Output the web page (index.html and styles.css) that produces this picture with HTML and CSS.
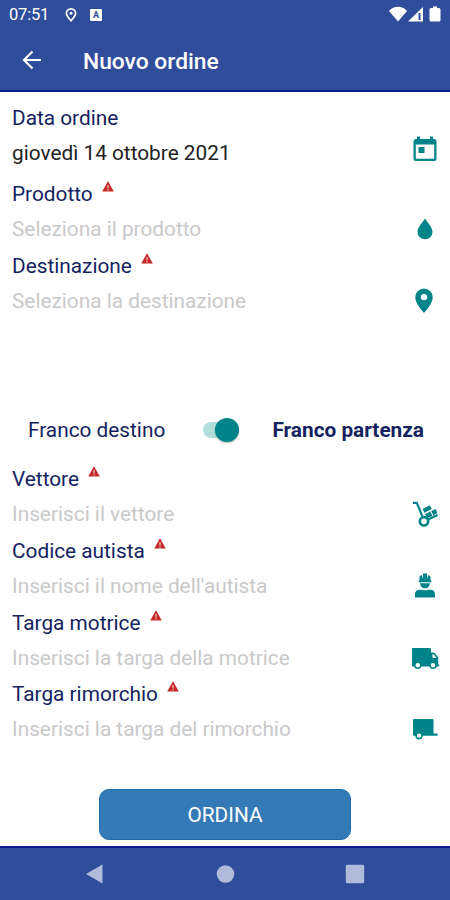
FILE: index.html
```html
<!DOCTYPE html>
<html lang="it">
<head>
<meta charset="utf-8">
<title>Nuovo ordine</title>
<link rel="stylesheet" href="styles.css">
</head>
<body>
<svg class="defs" aria-hidden="true">
  <symbol id="warn" viewBox="0 0 12 11"><path fill="#c62828" d="M6 .2 11.8 10.6H.2z"/><path stroke="#fff" stroke-opacity=".75" stroke-width="1.2" d="M6 4v3.4M6 8.3v1.1"/></symbol>
</svg>
<header class="top">
  <div class="status">
    <span class="clock">07:51</span>
    <svg class="s-pin" viewBox="0 0 12 14"><path fill="none" stroke="#fff" stroke-width="1.7" d="M6 12.8C3.2 9.7 1.4 7.4 1.4 5.3a4.6 4.4 0 0 1 9.2 0C10.6 7.4 8.8 9.7 6 12.8z"/><circle cx="6" cy="5.3" r="1.5" fill="#fff"/></svg>
    <span class="s-a">A</span>
    <svg class="s-net" viewBox="0 0 53 17"><path fill="#fff" d="M0 5C5-.6 13-.6 18 5L9 15.600zM19 15.600 34 1v14.600z"/><path fill="#2f4d9b" d="M29.500 7h2v7h-2z"/><path fill="#fff" d="M44 .5h4V2h2q1.500 0 1.500 1.500v10.600q0 1.500-1.500 1.500h-8q-1.500 0-1.500-1.500V3.500Q40.500 2 42 2h2z"/></svg>
  </div>
  <div class="bar">
    <svg class="back" viewBox="0 0 20 20"><path fill="none" stroke="#fff" stroke-width="2.200" d="M19 10H2.500M10.500 1.500 2 10l8.500 8.500"/></svg>
    <h1>Nuovo ordine</h1>
  </div>
</header>
<main>
  <section class="group">
    <div class="field date">
      <div><div class="label"><span>Data ordine</span></div><div class="value">giovedì 14 ottobre 2021</div></div>
      <svg class="icon" viewBox="0 0 28 28"><path fill="#008489" fill-rule="evenodd" d="M6 1.500h3V4h10V1.500h3V4h1q2.500 0 2.500 2.500v17q0 2.500-2.500 2.500H5q-2.500 0-2.500-2.500v-17Q2.500 4 5 4h1zM4.800 9.500v14.200h18.400V9.500zM7.500 12h6v6h-6z"/></svg>
    </div>
    <div class="field">
      <div><div class="label"><span>Prodotto</span><svg class="warn"><use href="#warn"/></svg></div><div class="hint">Seleziona il prodotto</div></div>
      <svg class="icon" viewBox="0 0 28 28"><path fill="#008489" d="M14 3.500C17 8 21.500 12.600 21.500 17a7.500 7.300 0 0 1-15 0C6.500 12.600 11 8 14 3.500z"/></svg>
    </div>
    <div class="field">
      <div><div class="label"><span>Destinazione</span><svg class="warn"><use href="#warn"/></svg></div><div class="hint">Seleziona la destinazione</div></div>
      <svg class="icon" viewBox="0 0 28 28"><path fill="#008489" fill-rule="evenodd" d="M13 26C8 20 4.300 15 4.300 10.200a8.700 8.700 0 0 1 17.400 0C21.700 15 18 20 13 26zM13 6.900a3.200 3.200 0 1 0 0 6.400 3.200 3.200 0 0 0 0-6.400z"/></svg>
    </div>
  </section>
  <div class="choice">
    <span class="off">Franco destino</span>
    <span class="switch"><span class="knob"></span></span>
    <span class="on">Franco partenza</span>
  </div>
  <section class="group">
    <div class="field">
      <div><div class="label"><span>Vettore</span><svg class="warn"><use href="#warn"/></svg></div><div class="hint">Inserisci il vettore</div></div>
      <svg class="icon" viewBox="0 0 28 28"><path fill="none" stroke="#008489" stroke-width="2.200" d="M2 2.800h3.800l5.700 14M17 19.500l9.500-4.500"/><circle cx="13" cy="21.300" r="4.200" fill="none" stroke="#008489" stroke-width="2.700"/><path fill="#008489" d="m11.500 9 7.300-3.800 2 3.900-7.300 3.700zM14 14.200l5.300-2.600 2.100 4.100-5.300 2.500zM20.300 11.100l4.200-2.200 2 4.200-4.200 2.100z"/></svg>
    </div>
    <div class="field">
      <div><div class="label"><span>Codice autista</span><svg class="warn"><use href="#warn"/></svg></div><div class="hint">Inserisci il nome dell'autista</div></div>
      <svg class="icon" viewBox="0 0 28 28"><g fill="#008489"><path d="M8.500 8.300V4.500q.8-1 2.300-1.500l1.200 4V1.500h4v5.500l1.200-4q1.500.5 2.300 1.500v3.800h.8v2H7.700v-2zM9 11.200h10q-.5 5-5 5t-5-5zM4 25.500v-3.200q0-4.600 5-4.600h1.500q3.500 1.300 7 0H19q5 0 5 4.600v3.200z"/></g></svg>
    </div>
    <div class="field">
      <div><div class="label"><span>Targa motrice</span><svg class="warn"><use href="#warn"/></svg></div><div class="hint">Inserisci la targa della motrice</div></div>
      <svg class="icon" viewBox="0 0 28 28"><path fill="#008489" d="M2 4h17q1 0 1 1v3.500h2.500q1 0 1.700 1l3 4v7H28v2H2q-1 0-1-1V5q0-1 1-1z"/><path fill="#fff" d="M21.500 10.300h1.300l2.600 3.700h-3.900z"/><g fill="#fff" stroke="#008489" stroke-width="1.500"><circle cx="6.800" cy="21.200" r="3"/><circle cx="22" cy="21.200" r="3"/></g></svg>
    </div>
    <div class="field">
      <div><div class="label"><span>Targa rimorchio</span><svg class="warn"><use href="#warn"/></svg></div><div class="hint">Inserisci la targa del rimorchio</div></div>
      <svg class="icon" viewBox="0 0 28 28"><path fill="#008489" d="M3 4h18.500q1 0 1 1v13.500H26.500v2.200H3q-1 0-1-1V5q0-1 1-1z"/><circle cx="8" cy="20.700" r="2.900" fill="#fff" stroke="#008489" stroke-width="1.600"/></svg>
    </div>
  </section>
  <button class="order">ORDINA</button>
</main>
<nav class="nav">
  <svg viewBox="0 0 20 20"><path fill="#b0bbdc" d="M17.500 .5v19L1 10z"/></svg>
  <svg viewBox="0 0 20 20"><circle cx="10.500" cy="10" r="8.800" fill="#b0bbdc"/></svg>
  <svg viewBox="0 0 20 20"><rect x=".8" y=".8" width="18.400" height="18.400" rx="1.500" fill="#b0bbdc"/></svg>
</nav>
</body>
</html>
```
FILE: styles.css
```css
* { box-sizing: border-box; }
body {
  margin: 0;
  width: 450px;
  height: 900px;
  display: flex;
  flex-direction: column;
  overflow: hidden;
  background: #fff;
  font-family: Roboto, sans-serif;
  font-size: 20.8px;
  color: #14235f;
}
.defs { display: none; }
svg { display: block; flex: none; }
.top {
  height: 92px;
  flex: none;
  background: #2f4d9b;
  border-bottom: 2px solid #0b1f8c;
  color: #fff;
}
.status {
  height: 29px;
  padding: 0 8px 0 9px;
  display: flex;
  align-items: center;
}
.clock { font-size: 16.5px; width: 56px; letter-spacing: -.2px; }
.s-pin { width: 12px; height: 14px; }
.s-a {
  width: 12px;
  height: 12px;
  margin-left: 13px;
  border-radius: 1px;
  background: #fff;
  color: #2f4d9b;
  font-size: 9px;
  font-weight: 700;
  line-height: 12px;
  text-align: center;
}
.s-net { width: 53px; height: 17px; margin-left: auto; }
.bar {
  height: 61px;
  padding-left: 22px;
  display: flex;
  align-items: center;
}
.back { width: 20px; height: 20px; }
h1 { margin: 4px 0 0 41px; font-size: 22.8px; font-weight: 500; line-height: 30px; }
main { height: 754px; flex: none; padding-top: 8px; }
.field {
  height: 71.6px;
  padding: 0 11px 0 12px;
  display: flex;
  justify-content: space-between;
}
.date { height: 76.2px; }
.label {
  height: 36px;
  display: flex;
  line-height: 37px;
}
.warn { width: 12px; height: 11px; margin: 5px 0 0 9px; }
.value, .hint { line-height: 35px; white-space: nowrap; }
.value { color: #222; }
.hint { color: #c9c9c9; }
.icon { width: 28px; height: 28px; margin-top: 39px; }
.date .icon { margin-top: 35px; }
.choice {
  height: 142px;
  padding: 99px 26px 0 28px;
  display: flex;
  justify-content: space-between;
  line-height: 24px;
}
.on { font-weight: 700; }
.switch {
  width: 36px;
  height: 16px;
  margin-top: 4px;
  border-radius: 8px;
  background: #b2dfdb;
  display: flex;
  justify-content: flex-end;
  align-items: center;
}
.knob {
  width: 24px;
  height: 24px;
  flex: none;
  border-radius: 50%;
  background: #008489;
  box-shadow: 0 1px 2px rgba(0, 0, 0, .3);
}
.on, .switch { position: relative; }
.switch { left: 2px; }
.order {
  display: block;
  width: 252px;
  height: 51px;
  margin: 41px auto 0 99px;
  padding: 2px 0 0;
  border: 1px solid #1f6da9;
  border-radius: 10px;
  background: #337ab7;
  color: #fff;
  font: 400 20.8px Roboto, sans-serif;
}
.nav {
  height: 54px;
  flex: none;
  padding: 0 85px;
  border-top: 2px solid #0b1f8c;
  background: #2f4d9b;
  display: flex;
  justify-content: space-between;
  align-items: center;
}
.nav svg { width: 20px; height: 20px; }
```
